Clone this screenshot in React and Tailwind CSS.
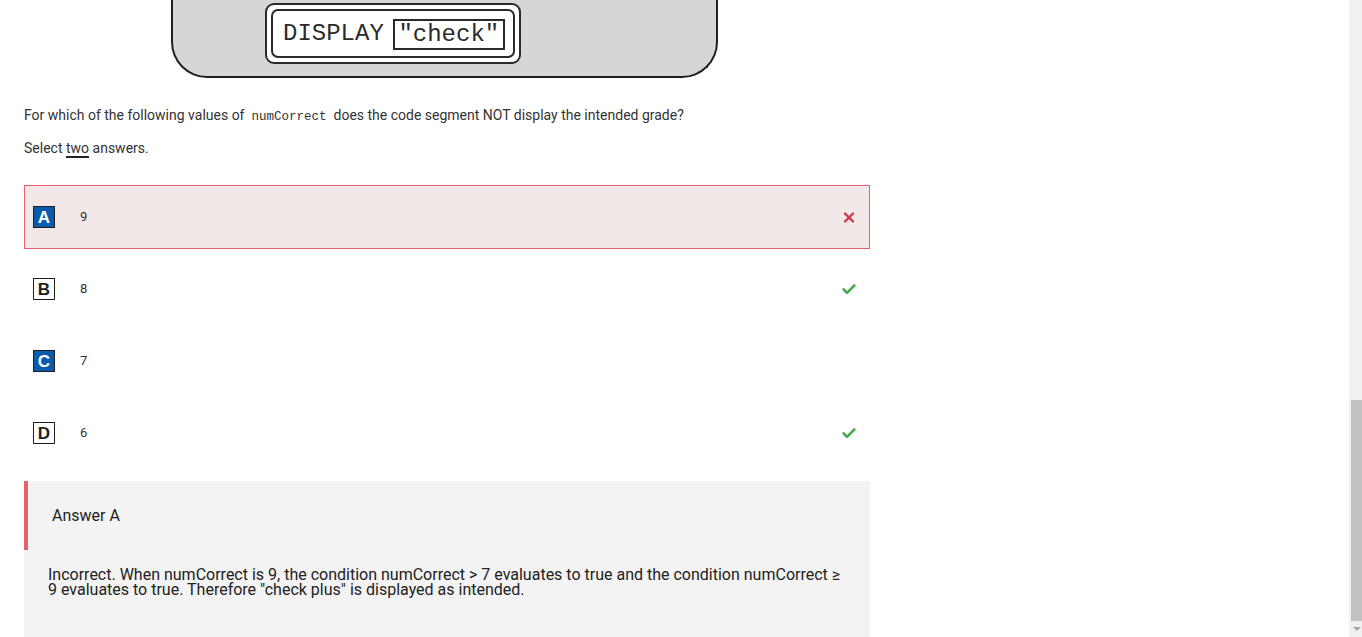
import { Check, X } from "lucide-react";

const options = [
  { letter: "A", value: "9", picked: true, mark: "wrong" },
  { letter: "B", value: "8", picked: false, mark: "right" },
  { letter: "C", value: "7", picked: true, mark: null },
  { letter: "D", value: "6", picked: false, mark: "right" },
];

function CodeBlock() {
  return (
    <div className="ml-[171px] h-[78px] w-[547px] rounded-b-[36px] border-2 border-t-0 border-[#1f1f1f] bg-[#d6d6d6]">
      <div className="ml-[92px] mt-[3px] inline-flex rounded-[9px] border-2 border-[#2a2a2a] bg-white p-[4px]">
        <div className="flex h-[49px] w-[244px] items-center rounded-[7px] border-2 border-[#2a2a2a] pl-[10px] font-['Liberation_Mono',monospace] text-[24px] text-[#2b2b2b]">
          <span>DISPLAY</span>
          <span className="ml-[9px] mt-[2px] flex h-[31px] w-[112px] items-center justify-center border-2 border-[#2a2a2a]">
            "check"
          </span>
        </div>
      </div>
    </div>
  );
}

function Option({ letter, value, picked, mark }) {
  const wrongPick = mark === "wrong";
  return (
    <div
      className={`mb-2 flex h-[64px] items-center border pl-[8px] pr-[12px] ${
        wrongPick ? "border-[#e8606a] bg-[#f2e8e8]" : "border-transparent"
      }`}
    >
      <span
        className={`flex h-[22px] w-[22px] items-center justify-center border border-[#1f1f1f] pt-[1px] font-['Liberation_Sans',sans-serif] text-[17px] font-bold leading-none ${
          picked ? "bg-[#0a5bab] text-white" : "bg-white text-[#1f1f1f]"
        }`}
      >
        {letter}
      </span>
      <span className="ml-[25px] text-[13px] text-[#333]">{value}</span>
      <span className="ml-auto flex w-[16px] justify-center">
        {mark === "wrong" && <X size={17} strokeWidth={3.5} className="text-[#d2353f]" />}
        {mark === "right" && <Check size={17} strokeWidth={4} className="text-[#4aa84e]" />}
      </span>
    </div>
  );
}

function Scrollbar() {
  return (
    <div className="flex h-full w-[13px] flex-col bg-[#f1f1f1]">
      <div className="h-[400px]" />
      <div className="ml-[2px] h-[221px] bg-[#c1c1c1]" />
      <div className="flex flex-1 items-center justify-center pl-[2px]">
        <div className="h-0 w-0 border-x-[4px] border-t-[4px] border-x-transparent border-t-[#a3a3a3]" />
      </div>
    </div>
  );
}

export default function App() {
  return (
    <div className="flex h-[637px] w-[1362px] overflow-hidden bg-white font-['Roboto',sans-serif] text-[#333]">
      <div className="w-[1349px] overflow-hidden">
        <CodeBlock />

        <div className="pl-[24px]">
          <p className="mt-[27px] text-[14px] leading-[20px]">
            For which of the following values of
            <code className="mx-[7px] font-['Liberation_Mono',monospace] text-[12.5px] text-[#333]">
              numCorrect
            </code>
            does the code segment NOT display the intended grade?
          </p>
          <p className="mt-[11px] text-[14px] leading-[20px]">
            Select{" "}
            <span className="inline-block border-b-2 border-[#222] leading-[16px]">two</span>{" "}
            answers.
          </p>

          <div className="mt-[27px] w-[846px]">
            {options.map((o) => (
              <Option key={o.letter} {...o} />
            ))}

            <div className="mt-[16px] bg-[#f3f3f3]">
              <div className="flex h-[69px] items-center border-l-4 border-[#e8606a] pl-[24px] text-[16px] text-[#222]">
                Answer A
              </div>
              <p className="px-[24px] pb-20 pt-[17px] text-[16px] leading-[15px] text-[#222]">
                Incorrect. When numCorrect is 9, the condition numCorrect &gt; 7 evaluates to true and
                the condition numCorrect ≥ 9 evaluates to true. Therefore "check plus" is displayed as
                intended.
              </p>
            </div>
          </div>
        </div>
      </div>
      <Scrollbar />
    </div>
  );
}
